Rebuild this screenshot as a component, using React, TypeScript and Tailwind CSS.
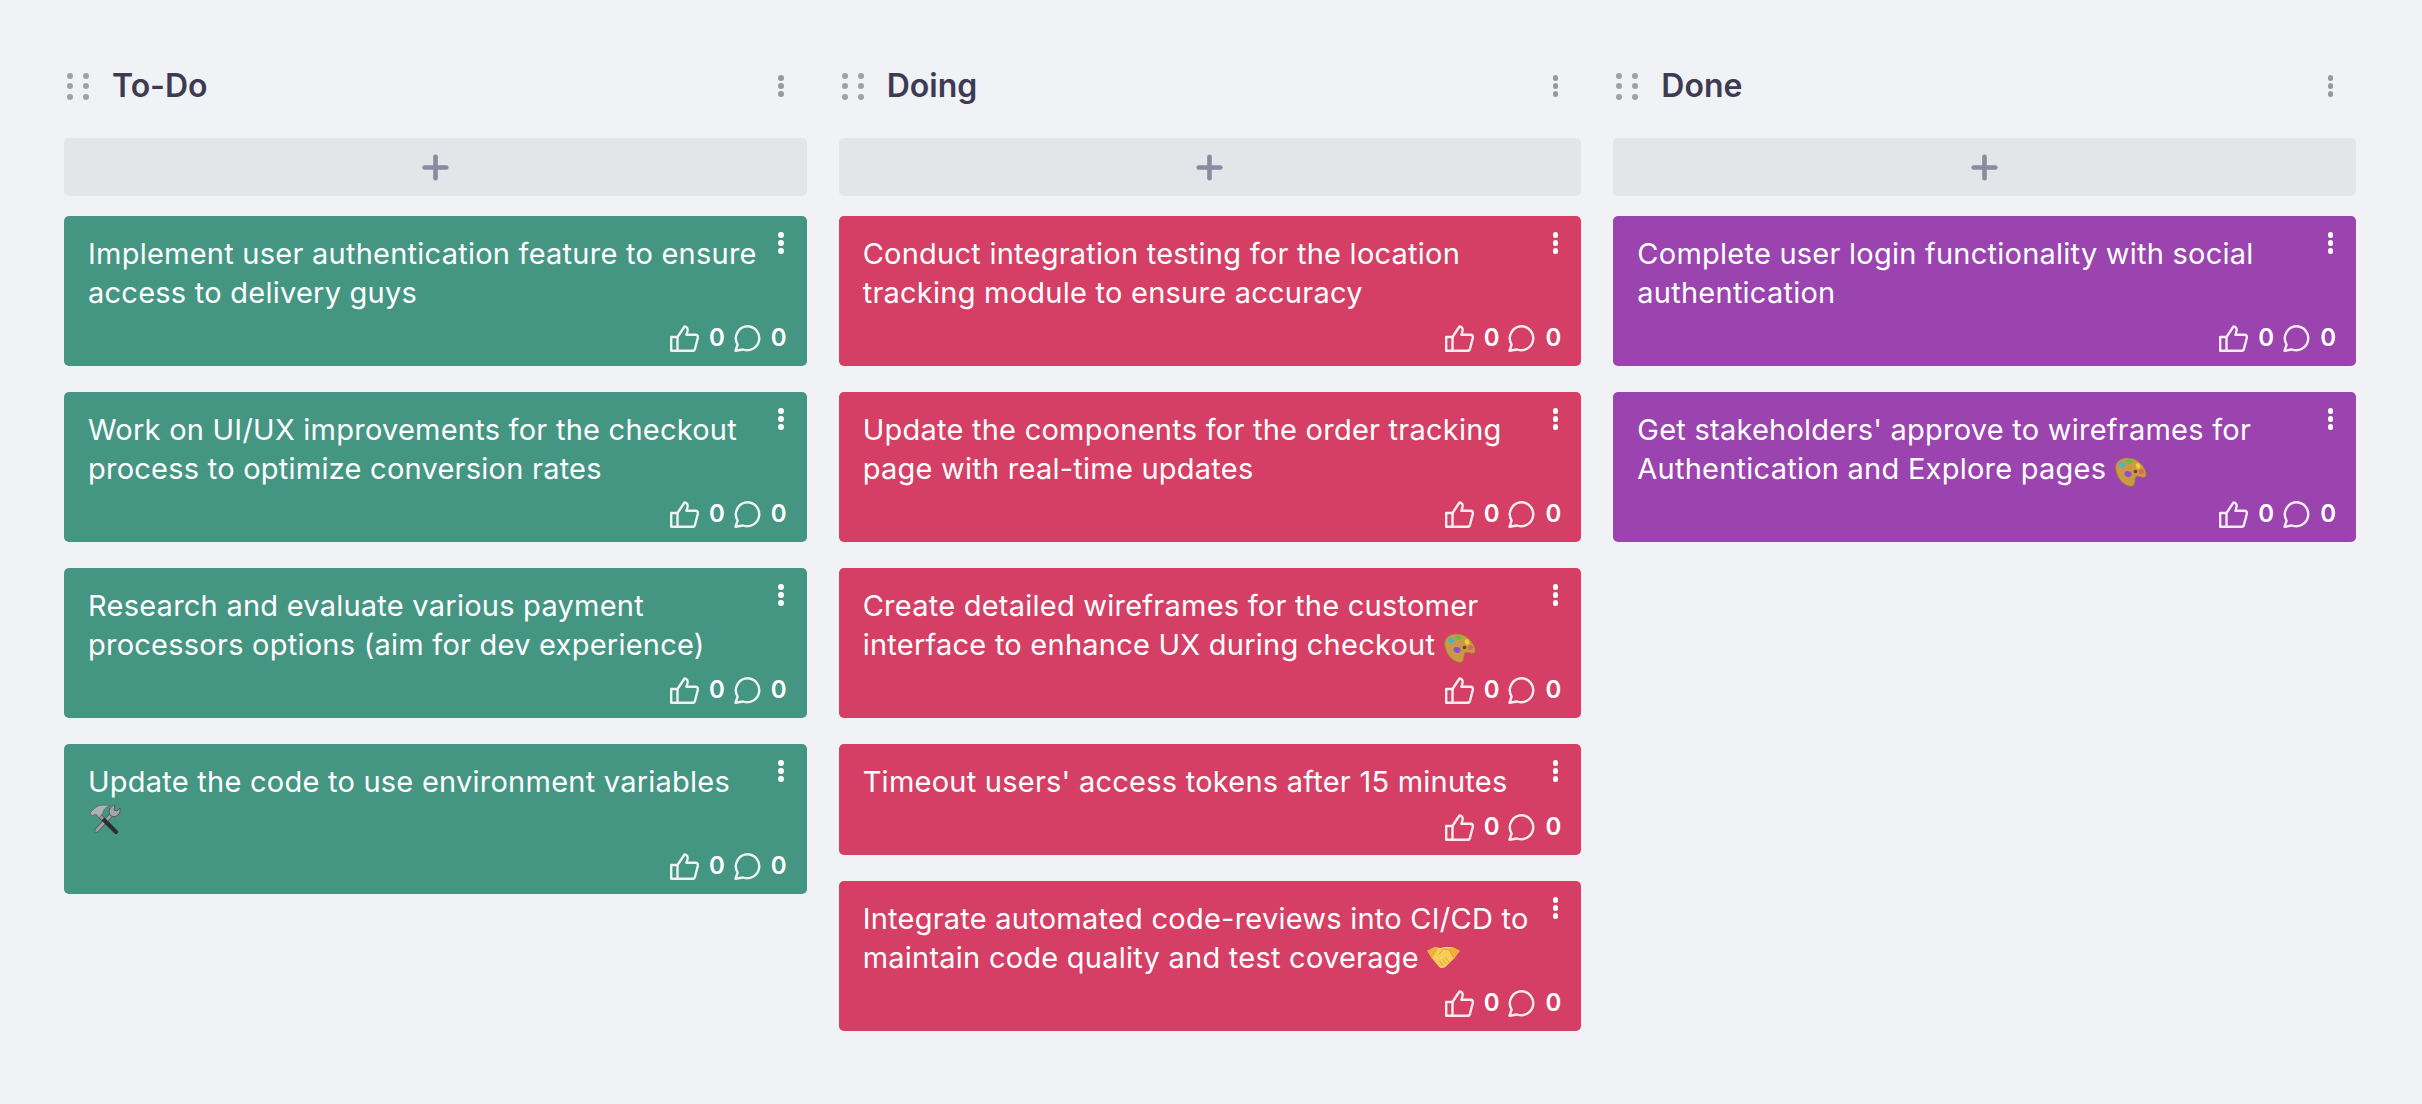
import React from 'react';
import { Plus } from 'lucide-react';

const HammerWrench = () => (
  <svg role="img" aria-label="🛠️" viewBox="0 0 32 30" className="inline-block ml-[1px] w-[32px] h-[30px] align-[-3px]">
    {/* wrench */}
    <path d="M24 9 L7 27" stroke="#55585c" strokeWidth="4.4" strokeLinecap="round" />
    <path d="M24 9 L7 27" stroke="#a3a7ab" strokeWidth="2.6" strokeLinecap="round" />
    <path d="M26 1 C21 2 19 7 21 11 C24 14 29 13 31 8 C31 6 31 5 31 4 L28 7 L25 6 Z" fill="#a3a7ab" stroke="#55585c" strokeWidth="1" strokeLinejoin="round" />
    <circle cx="6" cy="27" r="1.4" fill="#449683" />
    {/* hammer */}
    <path d="M10 11 L27 28" stroke="#2b2d2f" strokeWidth="4" strokeLinecap="round" />
    <path d="M8 9 L14 15" stroke="#8f9398" strokeWidth="3.4" />
    <path d="M1 9 L4 6 C8 1 15 0 21 2 C17 3 14 6 14 9 L10 14 L7 10 L3 12 Z" fill="#aeb1b5" stroke="#5f6266" strokeWidth="0.8" strokeLinejoin="round" />
  </svg>
);

const Palette = () => (
  <svg role="img" aria-label="🎨" viewBox="0 0 32 30" className="inline-block w-[32px] h-[30px] align-[-8px]">
    <path d="M1 8 C3 1 13 -1 21 3 C28 7 32 15 31 19 C29 22 25 19 22 19 C19 20 21 26 18 29 C12 31 4 24 2 17 C1 14 0 11 1 8 Z" fill="#c99a45" stroke="#a67a2e" strokeWidth="0.8" />
    <ellipse cx="7" cy="7.5" rx="3.2" ry="2.6" fill="#45b4d8" transform="rotate(30 7 7.5)" />
    <ellipse cx="14" cy="4.5" rx="3" ry="2.2" fill="#5cc04a" />
    <ellipse cx="23" cy="9" rx="2.2" ry="2.8" fill="#e6d23f" transform="rotate(-20 23 9)" />
    <ellipse cx="13" cy="17" rx="3.6" ry="2.8" fill="#8d4bd6" transform="rotate(20 13 17)" />
    <circle cx="20.5" cy="14.5" r="1.8" fill="#7b3f22" />
    <ellipse cx="26.5" cy="14.5" rx="2.4" ry="2.6" fill="#e0645a" />
  </svg>
);

const Handshake = () => (
  <svg role="img" aria-label="🤝" viewBox="0 0 34 24" className="inline-block w-[33px] h-[23px] align-[-1px]">
    <path d="M0 5 L8 1 L14 2 L18 1 L26 1 L34 5 L28 13 L19 22 C16 24 13 23 11 20 L5 13 Z" fill="#f6cd58" />
    <path d="M0 5 L8 1 L11 3 L5 13 Z" fill="#eeb03a" />
    <path d="M34 5 L26 1 L23 3 L28 13 Z" fill="#eeb03a" />
    <path d="M12 9 L17 3 L23 4 L28 13 M13 16 L17 21 M16 14 L20 19 M19 12 L23 17" fill="none" stroke="#dc9a2b" strokeWidth="1" />
  </svg>
);

// outlined like/comment icons, drawn to match the card footer
const ThumbIcon = () => (
  <svg viewBox="0 0 29 27" fill="none" stroke="currentColor" strokeWidth="2.4" strokeLinejoin="round" className="w-[29px] h-[27px] opacity-90">
    <path d="M1.2 12 H7.5 V25.8 H1.2 Z" />
    <path d="M7.5 12 L14.5 1.5 C17 1.5 18 3.5 17.5 6 L16.5 9.8 H25.5 C27.5 9.8 28.2 11.2 27.8 13 L25 23.8 C24.6 25.2 23.6 25.8 22.2 25.8 H7.5" />
  </svg>
);

const CommentIcon = () => (
  <svg viewBox="0 0 27 27" fill="none" stroke="currentColor" strokeWidth="2.4" strokeLinejoin="round" className="w-[27px] h-[27px] opacity-90">
    <path d="M14 1.3 A12 12 0 1 1 9 24.5 L1.5 25.8 L3.6 19.5 A12 12 0 0 1 14 1.3 Z" />
  </svg>
);

const Dots = ({ className }: { className: string }) => (
  <div className={`flex flex-col gap-[2.5px] ${className}`}>
    <span className="w-[5.5px] h-[5.5px] rounded-full bg-current" />
    <span className="w-[5.5px] h-[5.5px] rounded-full bg-current" />
    <span className="w-[5.5px] h-[5.5px] rounded-full bg-current" />
  </div>
);

const Grip = () => (
  <div className="grid grid-cols-2 gap-x-[10px] gap-y-[4.5px] text-[#a1a1a1]">
    {[0, 1, 2, 3, 4, 5].map((i) => (
      <span key={i} className="w-[6px] h-[6px] rounded-full bg-current" />
    ))}
  </div>
);

type Card = { text: React.ReactNode };

const columns: { title: string; color: string; cards: Card[] }[] = [
  {
    title: 'To-Do',
    color: 'bg-[#449683]',
    cards: [
      { text: 'Implement user authentication feature to ensure access to delivery guys' },
      { text: 'Work on UI/UX improvements for the checkout process to optimize conversion rates' },
      { text: 'Research and evaluate various payment processors options (aim for dev experience)' },
      { text: <>Update the code to use environment variables <HammerWrench /></> },
    ],
  },
  {
    title: 'Doing',
    color: 'bg-[#d63f65]',
    cards: [
      { text: 'Conduct integration testing for the location tracking module to ensure accuracy' },
      { text: 'Update the components for the order tracking page with real-time updates' },
      { text: <>Create detailed wireframes for the customer interface to enhance UX during checkout <Palette /></> },
      { text: "Timeout users' access tokens after 15 minutes" },
      { text: <>Integrate automated code-reviews into CI/CD to maintain code quality and test coverage <Handshake /></> },
    ],
  },
  {
    title: 'Done',
    color: 'bg-[#9b44b0]',
    cards: [
      { text: 'Complete user login functionality with social authentication' },
      { text: <>Get stakeholders' approve to wireframes for Authentication and Explore pages <Palette /></> },
    ],
  },
];

function TaskCard({ text, color }: { text: React.ReactNode; color: string }) {
  return (
    <div className={`${color} rounded-[5px] text-white pl-6 pr-5 pt-[18px] pb-[14px]`}>
      <div className="flex items-start justify-between gap-[13px]">
        <p className="text-[29px] leading-[39px] tracking-[0.24px]">{text}</p>
        <Dots className="text-white mt-[-2px] mr-[3px] shrink-0" />
      </div>
      <div className="flex items-center justify-end mt-[12px] h-[28px] text-[24px] font-semibold">
        <ThumbIcon />
        <span className="ml-[10px]">0</span>
        <span className="ml-[9px]"><CommentIcon /></span>
        <span className="ml-[10px]">0</span>
      </div>
    </div>
  );
}

export default function App() {
  return (
    <div className="min-h-screen bg-[#f1f2f6] font-['Inter',sans-serif] pl-[64px] pr-[66px] pt-[66px]">
      <div className="grid grid-cols-3 gap-[32px]">
        {columns.map((col) => (
          <div key={col.title}>
            <div className="flex items-center justify-between h-[40px] px-[3px] mb-[32px]">
              <div className="flex items-center gap-[23px]">
                <Grip />
                <h2 className="text-[32px] font-[570] text-[#3c3b52]">{col.title}</h2>
              </div>
              <Dots className="text-[#999999] mr-[20px]" />
            </div>
            <button className="w-full h-[58px] bg-[#e4e5e9] rounded-[5px] flex items-center justify-center text-[#8b8a9e] mb-[20px]">
              <Plus className="w-[37px] h-[37px]" strokeWidth={3} />
            </button>
            <div className="flex flex-col gap-[26px]">
              {col.cards.map((c, i) => (
                <TaskCard key={i} text={c.text} color={col.color} />
              ))}
            </div>
          </div>
        ))}
      </div>
    </div>
  );
}
